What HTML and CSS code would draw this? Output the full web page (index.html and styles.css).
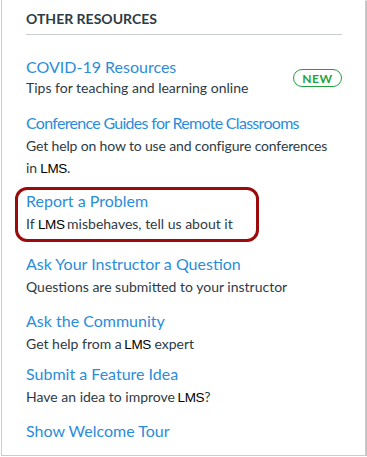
FILE: index.html
```html
<!DOCTYPE html>
<html lang="en">
<head>
<meta charset="utf-8">
<title>Other Resources</title>
<link rel="stylesheet" href="styles.css">
</head>
<body>
<div class="panel">
  <h2 class="panel-title">OTHER RESOURCES</h2>
  <ul class="resources">
    <li class="item item-first item-row">
      <div class="item-body">
        <a class="item-link" href="#">COVID-19 Resources</a>
        <p class="item-desc item-desc-tight">Tips for teaching and learning online</p>
      </div>
      <span class="badge">NEW</span>
    </li>
    <li class="item item-conf">
      <a class="item-link item-link-narrow" href="#">Conference Guides for Remote Classrooms</a>
      <p class="item-desc item-desc-narrow">Get help on how to use and configure conferences in <span class="brand">LMS</span>.</p>
    </li>
    <li class="item item-highlight">
      <a class="item-link" href="#">Report a Problem</a>
      <p class="item-desc">If <span class="brand brand-tight">LMS</span> misbehaves, tell us about it</p>
    </li>
    <li class="item">
      <a class="item-link" href="#">Ask Your Instructor a Question</a>
      <p class="item-desc">Questions are submitted to your instructor</p>
    </li>
    <li class="item item-community">
      <a class="item-link" href="#">Ask the Community</a>
      <p class="item-desc">Get help from a <span class="brand brand-lead">LMS</span> expert</p>
    </li>
    <li class="item item-idea">
      <a class="item-link" href="#">Submit a Feature Idea</a>
      <p class="item-desc">Have an idea to improve <span class="brand brand-lead">LMS</span>?</p>
    </li>
    <li class="item item-tour">
      <a class="item-link" href="#">Show Welcome Tour</a>
    </li>
  </ul>
</div>
</body>
</html>
```

FILE: styles.css
```css
html, body {
  margin: 0;
  padding: 0;
  background: #ffffff;
}

body {
  font-family: Lato, "Noto Sans", sans-serif;
  color: #2d3b45;
}

.panel {
  box-sizing: border-box;
  margin-left: 1px;
  width: 365px;
  height: 456px;
  border: 1px solid #c7cdd1;
  border-top: none;
  box-shadow: 1px 1px 1px rgba(0, 0, 0, 0.25);
  padding: 10px 23px 0 23px;
  background: #ffffff;
}

.panel-title {
  margin: 0 0 0 1px;
  font-size: 14px;
  line-height: 18px;
  font-weight: 700;
  color: #2d3b45;
  padding-bottom: 6px;
  border-bottom: 1px solid #c7cdd1;
}

.resources {
  list-style: none;
  margin: 0;
  padding: 0 0 0 1px;
}

.item {
  margin-top: 12px;
}

.item-first {
  margin-top: 22px;
}

.item-row {
  display: flex;
  align-items: center;
  justify-content: space-between;
}

.item-conf {
  margin-top: 14px;
}

.item-community {
  margin-top: 13px;
}

.item-idea {
  margin-top: 9px;
}

.item-tour {
  margin-top: 13px;
}

.item-link {
  display: block;
  font-size: 16px;
  line-height: 20px;
  color: #2a8ddb;
  text-decoration: none;
}

.item-link-narrow {
  letter-spacing: -0.7px;
}

.item-desc {
  margin: 2px 0 0 0;
  font-size: 14px;
  line-height: 22px;
  color: #2d3b45;
}

.item-desc-tight {
  margin-top: 0;
}

.item-desc-narrow {
  max-width: 306px;
  letter-spacing: -0.15px;
}

.brand {
  font-family: "Liberation Sans", Arial, sans-serif;
  color: #000000;
  font-size: 13.5px;
  line-height: 1;
  letter-spacing: -0.4px;
}

.brand-tight {
  margin-right: -1px;
}

.brand-lead {
  margin-left: -1px;
}

.item-highlight {
  box-sizing: border-box;
  margin-top: 8px;
  margin-left: -11px;
  width: 244px;
  padding: 1px 6px 4px 8px;
  border: 3px solid #9a0b0b;
  border-radius: 12px;
}

.badge {
  box-sizing: border-box;
  display: inline-flex;
  align-items: center;
  justify-content: center;
  width: 49px;
  height: 18px;
  border: 1px solid #1fa33a;
  border-radius: 9px;
  color: #1fa33a;
  font-size: 12px;
  font-weight: 700;
  letter-spacing: 0.6px;
}
```
